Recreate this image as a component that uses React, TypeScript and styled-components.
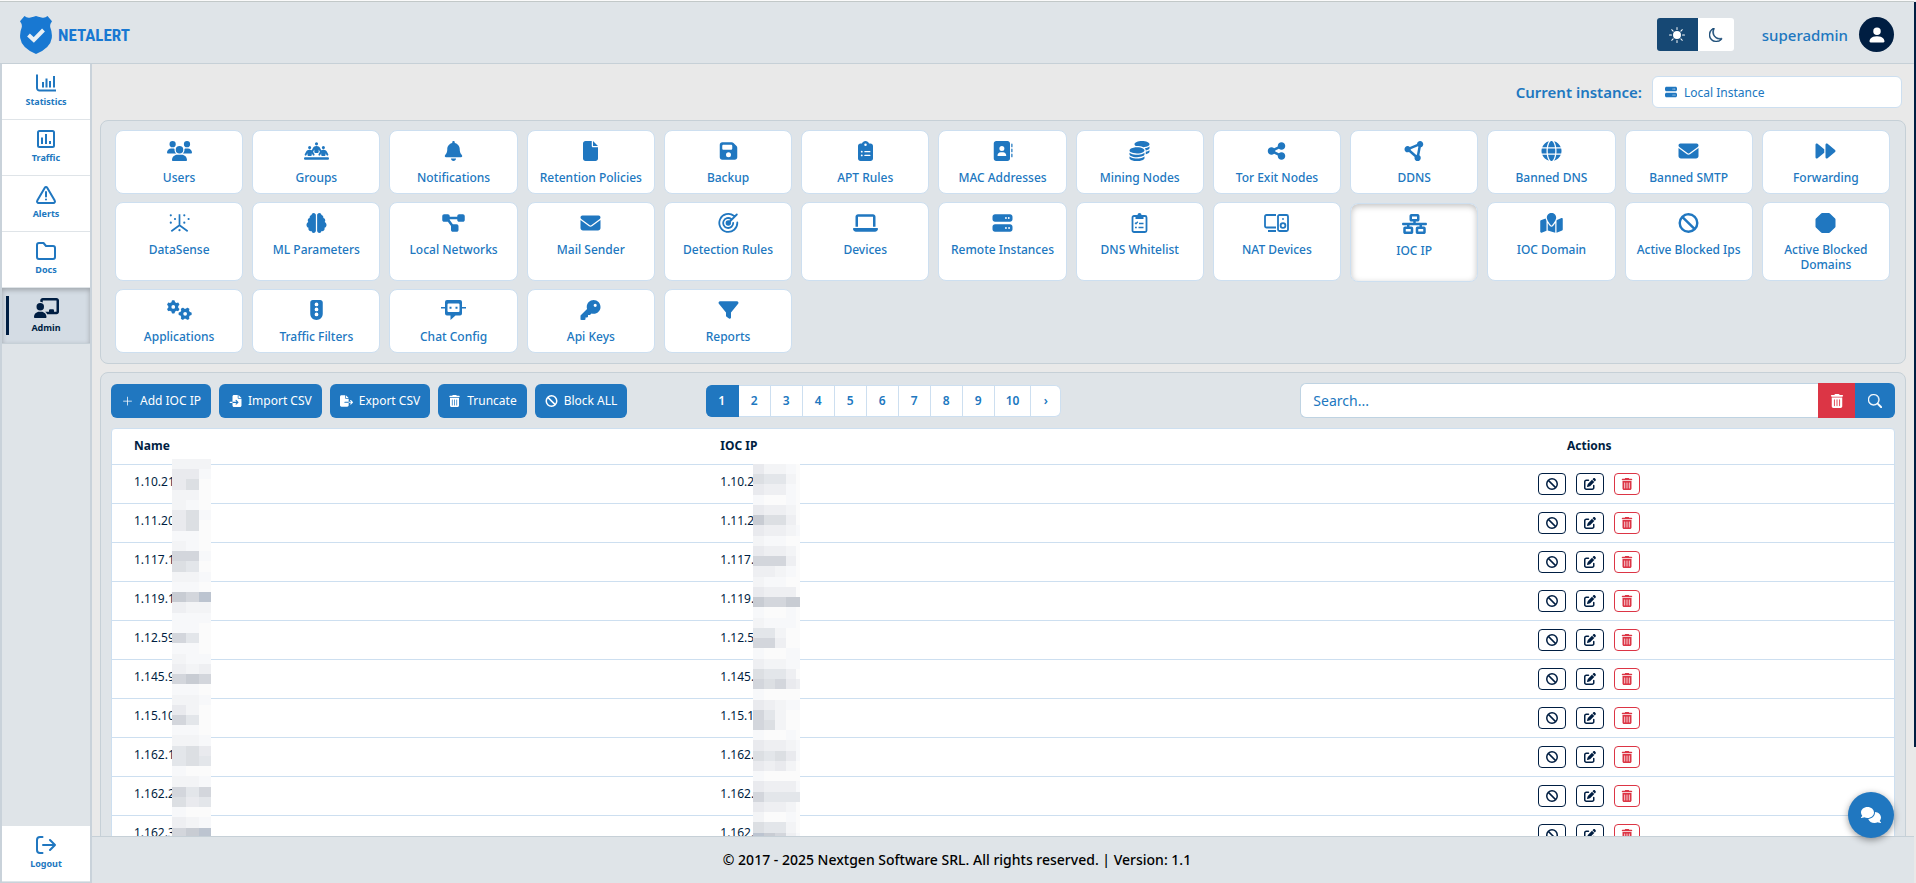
import React from 'react';
import styled, { createGlobalStyle, css } from 'styled-components';
import {
  FaUsers, FaPeopleLine, FaBell, FaFile, FaFloppyDisk, FaClipboardList, FaAddressBook, FaCoins,
  FaShareNodes, FaCircleNodes, FaGlobe, FaEnvelope, FaForward, FaBrain, FaDiagramProject, FaLaptop,
  FaServer, FaNetworkWired, FaMapLocation, FaBan, FaGears, FaTrafficLight, FaKey, FaFilter,
  FaFileImport, FaFileExport, FaTrashCan, FaPenToSquare, FaComments, FaChalkboardUser,
} from 'react-icons/fa6';
import { BsSunFill, BsMoon, BsPlusLg, BsSearch, BsPersonFill } from 'react-icons/bs';

const blue = '#2077c0';
const navy = '#001e42';
const surface = '#dfe4e8';
const line = '#c6d0d7';
const paleLine = '#cddff0';
const red = '#dc3545';

const GlobalStyle = createGlobalStyle`
  *, *::before, *::after { box-sizing: border-box; }
  body { margin: 0; background: #e9e9e9; overflow: hidden; }
  body, button, input, select { font-family: "Noto Sans", "Open Sans", sans-serif; }
  a { text-decoration: none; }
  button { cursor: pointer; margin: 0; }
  svg { display: block; flex: none; }
`;

/* ---------- page frame ---------- */

const Shell = styled.div`
  display: flex;
  flex-direction: column;
  height: 100vh;
  padding-right: 2px;
  border-top: 1px solid #fafafa;
`;

const Header = styled.header`
  flex: none;
  display: flex;
  align-items: center;
  justify-content: space-between;
  height: 63px;
  padding: 4px 20px 0;
  background: ${surface};
  border-top: 1px solid #c2c8c8;
  border-bottom: 1px solid ${line};
`;

const Brand = styled.a`
  display: flex;
  align-items: center;
  gap: 6px;
  color: #1878d2;
  font: 700 17px/24px "Liberation Sans Narrow", "Roboto Condensed", Roboto, sans-serif;
`;

const HeaderTools = styled.div`
  display: flex;
  align-items: center;
`;

const ThemeToggle = styled.div`
  display: flex;
  height: 33px;
  margin-right: 28px;
  border-radius: 3px;
  overflow: hidden;
`;

const ThemeButton = styled.button<{ $on?: boolean }>`
  display: flex;
  align-items: center;
  justify-content: center;
  width: ${p => (p.$on ? 41 : 36)}px;
  padding: 0;
  border: 0;
  background: ${p => (p.$on ? '#164874' : '#fff')};
  color: ${p => (p.$on ? '#fff' : '#164874')};
`;

const UserName = styled.span`
  margin-right: 11px;
  color: ${blue};
  font-size: 15px;
  font-weight: 500;
  line-height: 24px;
`;

const Avatar = styled.button`
  display: flex;
  align-items: center;
  justify-content: center;
  width: 35px;
  height: 35px;
  padding: 0;
  border: 0;
  border-radius: 50%;
  background: ${navy};
  color: #fff;
`;

const Body = styled.div`
  flex: 1;
  min-height: 0;
  display: flex;
`;

const Sidebar = styled.nav`
  flex: none;
  display: flex;
  flex-direction: column;
  width: 92px;
  background: ${surface};
  border: 2px solid #c9d2da;
  border-width: 0 2px 1px;
`;

const SideLink = styled.a<{ $active?: boolean; $last?: boolean }>`
  position: relative;
  display: flex;
  flex-direction: column;
  align-items: center;
  gap: 3px;
  height: 56px;
  padding-top: 10px;
  background: #fff;
  border-bottom: 1px solid #dfe4e8;
  color: ${blue};
  font-size: 9px;
  font-weight: 700;
  line-height: 14px;
  ${p => p.$last && css`margin-top: auto;`}
  ${p => p.$active && css`
    background: #d4dce4;
    color: ${navy};
    box-shadow: inset 0 2px 5px rgba(0, 0, 0, 0.25);
    border-bottom-color: ${line};
    svg { width: 25px; }
    &::before {
      content: "";
      position: absolute;
      left: 4px;
      top: 8px;
      bottom: 8px;
      width: 3px;
      background: ${navy};
    }
  `}
`;

const Column = styled.div`
  flex: 1;
  min-width: 0;
  display: flex;
  flex-direction: column;
`;

const Main = styled.main`
  flex: 1;
  min-height: 0;
  overflow: hidden;
  padding: 0 8px;
`;

const Footer = styled.footer`
  flex: none;
  height: 47px;
  padding: 0 92px 0 0;
  border-top: 1px solid ${line};
  background: ${surface};
  color: #000;
  font-size: 14px;
  font-weight: 500;
  line-height: 46px;
  text-align: center;
`;

const ScrollThumb = styled.div`
  position: fixed;
  top: 2px;
  right: 0;
  width: 2px;
  height: 84.4%;
  background: ${navy};
`;

const ChatButton = styled.button`
  position: fixed;
  right: 22px;
  bottom: 45px;
  display: flex;
  align-items: center;
  justify-content: center;
  width: 46px;
  height: 46px;
  padding: 0;
  border: 0;
  border-radius: 50%;
  background: ${blue};
  color: #fff;
  box-shadow: 0 2px 7px rgba(0, 0, 0, 0.4);
`;

/* ---------- instance picker ---------- */

const InstanceBar = styled.div`
  display: flex;
  align-items: center;
  justify-content: flex-end;
  gap: 10px;
  height: 56px;
  padding-right: 4px;
`;

const InstanceLabel = styled.label`
  color: ${blue};
  font-size: 15px;
  font-weight: 600;
`;

const SelectWrap = styled.div`
  position: relative;
  color: ${blue};
  svg { position: absolute; left: 13px; top: 10px; pointer-events: none; }
`;

const Select = styled.select`
  appearance: none;
  display: block;
  width: 250px;
  height: 32px;
  padding: 0 12px 0 31px;
  border: 1px solid ${paleLine};
  border-radius: 6px;
  background: #fff;
  color: ${blue};
  font-size: 12px;
`;

/* ---------- panels ---------- */

const Panel = styled.section`
  border: 1px solid ${line};
  border-radius: 8px;
  background: ${surface};
`;

const TilePanel = styled(Panel)`
  display: grid;
  grid-template-columns: repeat(13, minmax(0, 1fr));
  gap: 8px 9px;
  margin-bottom: 8px;
  padding: 9px 15px 10px 14px;
`;

const Tile = styled.a<{ $active?: boolean }>`
  display: flex;
  flex-direction: column;
  align-items: center;
  gap: 9px;
  padding: 10px 9px 8px;
  border: 1px solid ${paleLine};
  border-radius: 8px;
  background: #fff;
  color: ${blue};
  font-size: 12px;
  font-weight: 500;
  line-height: 15px;
  text-align: center;
  ${p => p.$active && css`
    transform: translateY(1px);
    box-shadow: inset 0 2px 6px rgba(0, 0, 0, 0.25);
  `}
`;

/* Every tile icon is centred in a box of the same size and keeps its own proportions. */
const TileIcon = styled.span`
  display: flex;
  align-items: center;
  justify-content: center;
  height: 20px;
  svg { width: 25px; }
`;

const ListPanel = styled(Panel)`
  padding: 10px;
`;

const Toolbar = styled.div`
  display: grid;
  grid-template-columns: repeat(3, minmax(0, 1fr));
  align-items: center;
  margin-bottom: 10px;
`;

const Actions = styled.div`
  display: flex;
  gap: 8px;
`;

const ActionButton = styled.button`
  display: flex;
  align-items: center;
  gap: 6px;
  height: 34px;
  padding: 0 10px;
  border: 0;
  border-radius: 6px;
  background: ${blue};
  color: #fff;
  font-size: 12px;
  line-height: 18px;
  white-space: nowrap;
  svg { width: 13px; }
`;

const Pagination = styled.nav`
  display: flex;
`;

const PageButton = styled.button<{ $on?: boolean }>`
  min-width: 32px;
  height: 32px;
  padding: 0 11px;
  border: 1px solid ${paleLine};
  border-left-width: 0;
  background: #fff;
  color: ${blue};
  font-size: 12px;
  font-weight: 600;
  &:first-child { border-radius: 6px 0 0 6px; min-width: 33px; }
  &:last-child { border-radius: 0 6px 6px 0; min-width: 30px; }
  ${p => p.$on && css`
    background: ${blue};
    border-color: ${blue};
    color: #fff;
  `}
`;

const SearchForm = styled.form`
  display: flex;
  height: 35px;
`;

const SearchInput = styled.input`
  flex: 1;
  min-width: 0;
  padding: 0 12px;
  border: 1px solid #bfd3e2;
  border-right: 0;
  border-radius: 6px 0 0 6px;
  background: #fff;
  font-size: 14px;
  &::placeholder { color: ${blue}; opacity: 1; }
`;

const SearchButton = styled.button<{ $danger?: boolean }>`
  display: flex;
  align-items: center;
  justify-content: center;
  width: ${p => (p.$danger ? 37 : 40)}px;
  padding: 0;
  border: 0;
  border-radius: ${p => (p.$danger ? '0' : '0 6px 6px 0')};
  background: ${p => (p.$danger ? red : blue)};
  color: #fff;
`;

const TableFrame = styled.div`
  border: 1px solid ${paleLine};
  border-radius: 4px;
  background: #fff;
`;

const Table = styled.table`
  width: 100%;
  border-collapse: collapse;
  table-layout: fixed;
  color: ${navy};
  font-size: 12px;
`;

const HeadCell = styled.th<{ $center?: boolean }>`
  position: relative;
  width: ${p => (p.$center ? 'auto' : '32.9%')};
  height: 35px;
  padding: 0 22px;
  border-bottom: 1px solid ${paleLine};
  font-weight: 700;
  line-height: 16px;
  text-align: ${p => (p.$center ? 'center' : 'left')};
`;

const Cell = styled.td`
  height: 39px;
  padding: 8px 22px 0;
  border-bottom: 1px solid ${paleLine};
  line-height: 17px;
  vertical-align: top;
`;

const RowActions = styled.div`
  display: flex;
  justify-content: center;
  gap: 10px;
`;

const RowButton = styled.button<{ $danger?: boolean }>`
  display: flex;
  align-items: center;
  justify-content: center;
  width: ${p => (p.$danger ? 26 : 28)}px;
  height: 22px;
  padding: 0;
  border: 1px solid ${p => (p.$danger ? red : navy)};
  border-radius: 4px;
  background: #fff;
  color: ${p => (p.$danger ? red : navy)};
`;

const MosaicSvg = styled.svg<{ $top: number; $left: number }>`
  position: absolute;
  top: ${p => p.$top}px;
  left: ${p => p.$left}px;
`;

/* ---------- drawn icons ---------- */

const Stroke = ({ size, w = 2, children, box = '0 0 24 24', width }: {
  size: number; w?: number; box?: string; width?: number; children: React.ReactNode;
}) => (
  <svg width={width ?? size} height={size} viewBox={box} fill="none" stroke="currentColor" strokeWidth={w}
    strokeLinecap="round" strokeLinejoin="round" aria-hidden>{children}</svg>
);

const Shield = () => (
  <svg width="32" height="38" viewBox="0 0 32 38" aria-hidden>
    <path fill="#1878d2" d="M4.500 0 Q7 2.400 10.500 1.500 Q14 .8 16 0 Q18 .8 21.500 1.500 Q25 2.400 27.500 0 L32 5.200 Q29.500 8.500 30.300 11.500 Q32.400 16.500 31.800 22 Q30.500 32 16 38 Q1.500 32 .2 22 Q-.4 16.500 1.700 11.500 Q2.500 8.500 0 5.200 Z" />
    <path fill="none" stroke="#e9f0f5" strokeWidth="4" d="M8.500 19 L13.800 24 L23.500 14" />
  </svg>
);

const StatsIcon = () => (
  <Stroke size={18} width={20} box="0 0 20 18" w={2}>
    <path strokeLinecap="butt" d="M1 0.500v13.500a2.500 2.500 0 0 0 2.500 2.500H20M7 13.500V8M10.500 13.500V4.500M14 13.500V7M18 13.500V2" />
  </Stroke>
);
const TrafficIcon = () => (
  <Stroke size={18} box="0 0 18 18" w={2}>
    <rect x="1" y="1" width="16" height="16" rx="1.5" /><path strokeLinecap="butt" d="M5 14V7.500M9 14V4M13 14v-3" />
  </Stroke>
);
const AlertIcon = () => (
  <Stroke size={18} width={20} box="0 0 20 18" w={2}>
    <path d="M8.800 1.800 1.300 14.600a1.500 1.500 0 0 0 1.300 2.300h14.800a1.500 1.500 0 0 0 1.300-2.300L11.200 1.800a1.400 1.400 0 0 0-2.400 0ZM10 6v4.500M10 13.400v.2" />
  </Stroke>
);
const FolderIcon = () => (
  <Stroke size={18} width={20} box="0 0 20 18" w={2}>
    <path d="M1 3a2 2 0 0 1 2-2h4.500L10 4h7a2 2 0 0 1 2 2v9a2 2 0 0 1-2 2H3a2 2 0 0 1-2-2Z" />
  </Stroke>
);
const LogoutIcon = () => (
  <Stroke size={18} width={20} box="0 0 20 18" w={2}>
    <path d="M6.500 1H4a3 3 0 0 0-3 3v10a3 3 0 0 0 3 3h2.500M7 9h12M14 4l5 5-5 5" />
  </Stroke>
);
const ScatterIcon = () => (
  <Stroke size={20} width={21} box="0 0 21 20" w={1.700}>
    <path strokeLinecap="butt" d="M10.500 1.300v11L2.300 18.300M10.500 12.300l8.200 6" />
    <path strokeWidth="2.200" d="M1.800 2.300v.01M6 6v.01M1.800 9.700v.01M15.300 2.300v.01M19.600 6v.01M15.300 9.700v.01M10.500 17.200v.01" />
  </Stroke>
);
const RadarIcon = () => (
  <Stroke size={20} width={21} box="0 0 21 20" w={1.800}>
    <path d="M19.300 9.500A9 9 0 1 1 15.800 2.800M15.200 9.800A5 5 0 1 1 13.200 6M10.300 10 18.800 1.500" />
    <circle cx="10.300" cy="10" r="1.800" fill="currentColor" />
  </Stroke>
);
const WhitelistIcon = () => (
  <Stroke size={20} width={16} box="0 0 16 20" w={1.800}>
    <rect x="1" y="3" width="14" height="16" rx="1.500" />
    <path fill="currentColor" stroke="none" d="M4 2h2a2 2 0 0 1 4 0h2v4H4Z" />
    <path strokeWidth="1.300" strokeLinecap="butt" d="M3.500 9.800l1 1 1.800-2M7.500 10.500h4.500M3.500 14.500h1.800M7 14.500h5" />
  </Stroke>
);
const NatIcon = () => (
  <Stroke size={18} width={25} box="0 0 25 18" w={1.800}>
    <path strokeLinecap="butt" d="M12 13.500H2.500A1.500 1.500 0 0 1 1 12V2.500A1.500 1.500 0 0 1 2.500 1H12M4 17h8" />
    <rect x="14" y="1" width="10" height="16" rx="1.500" /><circle cx="19" cy="11.500" r="2.400" /><path d="M19 5v.1" />
  </Stroke>
);
const ChatbotIcon = () => (
  <svg width="25" height="20" viewBox="0 0 25 20" fill="currentColor" aria-hidden>
    <path fillRule="evenodd" d="M6 0h13a2 2 0 0 1 2 2v11.500a2 2 0 0 1-2 2h-4.500L9.500 20v-4.500H6a2 2 0 0 1-2-2V2a2 2 0 0 1 2-2Zm1.500 3.500a1 1 0 0 0-1 1v6.500a1 1 0 0 0 1 1h10a1 1 0 0 0 1-1V4.500a1 1 0 0 0-1-1Z" />
    <path d="M8.500 6.700h2v2h-2zM14.500 6.700h2v2h-2zM0 7h4.500v1.600H0zM20.500 7H25v1.600h-4.500z" />
  </svg>
);
const OctagonIcon = () => (
  <svg width="20" height="20" viewBox="0 0 20 20" fill="currentColor" aria-hidden>
    <path d="M6.500 0h7Q14 0 14.400.4l5.200 5.200q.4.400.4.900v7q0 .5-.4.900l-5.200 5.200q-.4.400-.9.400h-7q-.5 0-.9-.4L.4 14.400Q0 14 0 13.500v-7Q0 6 .4 5.600L5.600.4Q6 0 6.500 0Z" />
  </svg>
);

/* ---------- data ---------- */

const sideLinks = [
  { label: 'Statistics', icon: <StatsIcon /> },
  { label: 'Traffic', icon: <TrafficIcon /> },
  { label: 'Alerts', icon: <AlertIcon /> },
  { label: 'Docs', icon: <FolderIcon /> },
];

const tiles: [string, React.ReactNode][] = [
  ['Users', <FaUsers size={20} />],
  ['Groups', <FaPeopleLine size={20} />],
  ['Notifications', <FaBell size={20} />],
  ['Retention Policies', <FaFile size={20} />],
  ['Backup', <FaFloppyDisk size={20} />],
  ['APT Rules', <FaClipboardList size={20} />],
  ['MAC Addresses', <FaAddressBook size={20} />],
  ['Mining Nodes', <FaCoins size={20} />],
  ['Tor Exit Nodes', <FaShareNodes size={20} />],
  ['DDNS', <FaCircleNodes size={20} />],
  ['Banned DNS', <FaGlobe size={20} />],
  ['Banned SMTP', <FaEnvelope size={20} />],
  ['Forwarding', <FaForward size={20} />],
  ['DataSense', <ScatterIcon />],
  ['ML Parameters', <FaBrain size={20} />],
  ['Local Networks', <FaDiagramProject size={20} />],
  ['Mail Sender', <FaEnvelope size={20} />],
  ['Detection Rules', <RadarIcon />],
  ['Devices', <FaLaptop size={20} />],
  ['Remote Instances', <FaServer size={20} />],
  ['DNS Whitelist', <WhitelistIcon />],
  ['NAT Devices', <NatIcon />],
  ['IOC IP', <FaNetworkWired size={20} />],
  ['IOC Domain', <FaMapLocation size={20} />],
  ['Active Blocked Ips', <FaBan size={20} />],
  ['Active Blocked Domains', <OctagonIcon />],
  ['Applications', <FaGears size={20} />],
  ['Traffic Filters', <FaTrafficLight size={20} />],
  ['Chat Config', <ChatbotIcon />],
  ['Api Keys', <FaKey size={20} />],
  ['Reports', <FaFilter size={20} />],
];

const rows: [string, string][] = [
  ['1.10.21', '1.10.2'],
  ['1.11.20', '1.11.2'],
  ['1.117.1', '1.117.'],
  ['1.119.1', '1.119.'],
  ['1.12.59', '1.12.5'],
  ['1.145.9', '1.145.'],
  ['1.15.10', '1.15.1'],
  ['1.162.1', '1.162.'],
  ['1.162.2', '1.162.'],
  ['1.162.3', '1.162.'],
];

/* Shades of the redaction blocks, lightest (0) to darkest (9); one string per band. */
const shades = ['#fbfbfb', '#f7f8fa', '#f3f4f6', '#eeeff2', '#e9eaee', '#e3e6ea', '#dcdfe3', '#d3d6dc', '#c8ccd3', '#bcc4d0'];

const nameBands = [
  '222', '441', '460', '220', '210', '461', '460', '110', '210', '771', '650', '221', '110', '879', '322', '111',
  '110', '750', '110', '211', '323', '787', '110', '221', '420', '750', '110', '221', '564', '565', '100', '221',
  '757', '645', '100', '321', '789',
];
const ipBands = [
  '42210', '65520', '43310', '10010', '43320', '86630', '43321', '21100', '43320', '77730', '33210', '21100',
  '43330', '87788', '10010', '21110', '55200', '77300', '10011', '32211', '65530', '76743', '10000', '43211',
  '75200', '76200', '10010', '43321', '65641', '43420', '10000', '43331', '75555', '43320', '20010', '65520', '98731',
];

function Mosaic({ bands, edges, top, left }: { bands: string[]; edges: number[]; top: number; left: number }) {
  const width = edges[edges.length - 1];
  const y = (i: number) => Math.round(i * 10.24);
  return (
    <MosaicSvg $top={top} $left={left} width={width} height={y(bands.length)} aria-hidden>
      {bands.flatMap((band, r) => band.split('').map((shade, c) => (
        <rect key={`${r}-${c}`} x={edges[c]} y={y(r)} width={edges[c + 1] - edges[c]}
          height={y(r + 1) - y(r)} fill={shades[Number(shade)]} />
      )))}
    </MosaicSvg>
  );
}

export default function App() {
  return (
    <>
      <GlobalStyle />
      <Shell>
        <Header>
          <Brand href="#"><Shield />NETALERT</Brand>
          <HeaderTools>
            <ThemeToggle>
              <ThemeButton $on aria-label="Light theme"><BsSunFill size={16} /></ThemeButton>
              <ThemeButton aria-label="Dark theme"><BsMoon size={14} strokeWidth={0.700} /></ThemeButton>
            </ThemeToggle>
            <UserName>superadmin</UserName>
            <Avatar aria-label="Account"><BsPersonFill size={20} /></Avatar>
          </HeaderTools>
        </Header>
        <Body>
          <Sidebar>
            {sideLinks.map(l => <SideLink key={l.label} href="#">{l.icon}{l.label}</SideLink>)}
            <SideLink href="#" $active><FaChalkboardUser size={20} />Admin</SideLink>
            <SideLink href="#" $last><LogoutIcon />Logout</SideLink>
          </Sidebar>
          <Column>
            <Main>
              <InstanceBar>
                <InstanceLabel htmlFor="instance">Current instance:</InstanceLabel>
                <SelectWrap>
                  <FaServer size={12} />
                  <Select id="instance"><option>Local Instance</option></Select>
                </SelectWrap>
              </InstanceBar>
              <TilePanel>
                {tiles.map(([label, icon]) => (
                  <Tile key={label} href="#" $active={label === 'IOC IP'}>
                    <TileIcon>{icon}</TileIcon>
                    {label}
                  </Tile>
                ))}
              </TilePanel>
              <ListPanel>
                <Toolbar>
                  <Actions>
                    <ActionButton><BsPlusLg size={12} />Add IOC IP</ActionButton>
                    <ActionButton><FaFileImport size={12} />Import CSV</ActionButton>
                    <ActionButton><FaFileExport size={12} />Export CSV</ActionButton>
                    <ActionButton><FaTrashCan size={12} />Truncate</ActionButton>
                    <ActionButton><FaBan size={12} />Block ALL</ActionButton>
                  </Actions>
                  <Pagination aria-label="Pages">
                    {['1', '2', '3', '4', '5', '6', '7', '8', '9', '10', '›'].map(p => (
                      <PageButton key={p} $on={p === '1'}>{p}</PageButton>
                    ))}
                  </Pagination>
                  <SearchForm>
                    <SearchInput type="text" placeholder="Search..." aria-label="Search" />
                    <SearchButton $danger type="button" aria-label="Clear"><FaTrashCan size={14} /></SearchButton>
                    <SearchButton type="button" aria-label="Search"><BsSearch size={14} strokeWidth={0.500} /></SearchButton>
                  </SearchForm>
                </Toolbar>
                <TableFrame>
                  <Table>
                    <thead>
                      <tr>
                        <HeadCell>Name<Mosaic bands={nameBands} edges={[0, 14, 27, 39]} top={30} left={60} /></HeadCell>
                        <HeadCell>IOC IP<Mosaic bands={ipBands} edges={[0, 11, 22, 33, 43, 47]} top={35} left={55} /></HeadCell>
                        <HeadCell $center>Actions</HeadCell>
                      </tr>
                    </thead>
                    <tbody>
                      {rows.map(([name, ip]) => (
                        <tr key={name}>
                          <Cell>{name}</Cell>
                          <Cell>{ip}</Cell>
                          <Cell>
                            <RowActions>
                              <RowButton aria-label="Block"><FaBan size={12} /></RowButton>
                              <RowButton aria-label="Edit"><FaPenToSquare size={12} /></RowButton>
                              <RowButton $danger aria-label="Delete"><FaTrashCan size={12} /></RowButton>
                            </RowActions>
                          </Cell>
                        </tr>
                      ))}
                    </tbody>
                  </Table>
                </TableFrame>
              </ListPanel>
            </Main>
            <Footer>© 2017 - 2025 Nextgen Software SRL. All rights reserved. | Version: 1.1</Footer>
          </Column>
        </Body>
      </Shell>
      <ScrollThumb />
      <ChatButton aria-label="Open chat"><FaComments size={20} /></ChatButton>
    </>
  );
}
